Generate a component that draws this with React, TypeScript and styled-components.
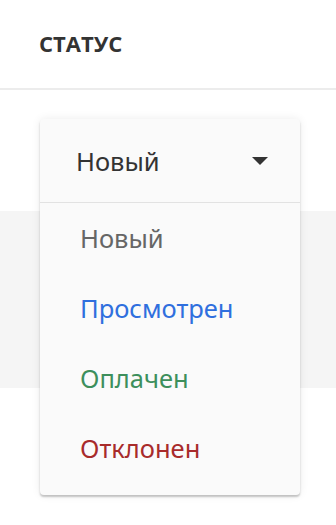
import styled, { createGlobalStyle } from "styled-components";

const GlobalStyle = createGlobalStyle`
  html, body {
    margin: 0;
    padding: 0;
    background: #ffffff;
  }
  body {
    font-family: "Open Sans", "Noto Sans", sans-serif;
    color: #333333;
  }
`;

const Page = styled.div`
  position: relative;
  width: 336px;
  height: 525px;
  overflow: hidden;
  background: #ffffff;
`;

const HeaderCell = styled.div`
  height: 90px;
  box-sizing: border-box;
  display: flex;
  align-items: center;
  padding: 0 0 3px 39px;
  border-bottom: 2px solid #ececec;
  font-size: 22px;
  font-weight: 700;
  color: #333333;
`;

const TableRow = styled.div<{ $height: number; $shade?: boolean }>`
  height: ${(p) => p.$height}px;
  background: ${(p) => (p.$shade ? "#f5f5f5" : "#ffffff")};
`;

const Menu = styled.div`
  position: absolute;
  top: 119px;
  left: 40px;
  width: 260px;
  box-sizing: border-box;
  background: #fafafa;
  border-radius: 4px;
  padding-bottom: 12px;
  box-shadow: 0 2px 2px rgba(0, 0, 0, 0.22), 0 0 10px rgba(0, 0, 0, 0.08);
  font-family: "Noto Sans", "Open Sans", sans-serif;
`;

const Trigger = styled.div`
  height: 84px;
  box-sizing: border-box;
  display: flex;
  align-items: center;
  justify-content: space-between;
  padding: 0 32px 0 36px;
  border-bottom: 1px solid #e2e2e2;
  font-size: 25.5px;
  color: #333333;
`;

const Caret = styled.span`
  width: 0;
  height: 0;
  border-left: 8px solid transparent;
  border-right: 8px solid transparent;
  border-top: 8px solid #333333;
`;

const Option = styled.div<{ $color: string }>`
  height: 70px;
  display: flex;
  align-items: center;
  padding-left: 40px;
  font-size: 25.5px;
  color: ${(p) => p.$color};
`;

const options = [
  { label: "Новый", color: "#666666" },
  { label: "Просмотрен", color: "#2f6fde" },
  { label: "Оплачен", color: "#3d8f5c" },
  { label: "Отклонен", color: "#a82b2b" },
];

export default function App() {
  return (
    <>
      <GlobalStyle />
      <Page>
        <HeaderCell>СТАТУС</HeaderCell>
        <TableRow $height={121} />
        <TableRow $height={177} $shade />
        <Menu>
          <Trigger>
            <span>Новый</span>
            <Caret />
          </Trigger>
          {options.map((o) => (
            <Option key={o.label} $color={o.color}>
              {o.label}
            </Option>
          ))}
        </Menu>
      </Page>
    </>
  );
}
